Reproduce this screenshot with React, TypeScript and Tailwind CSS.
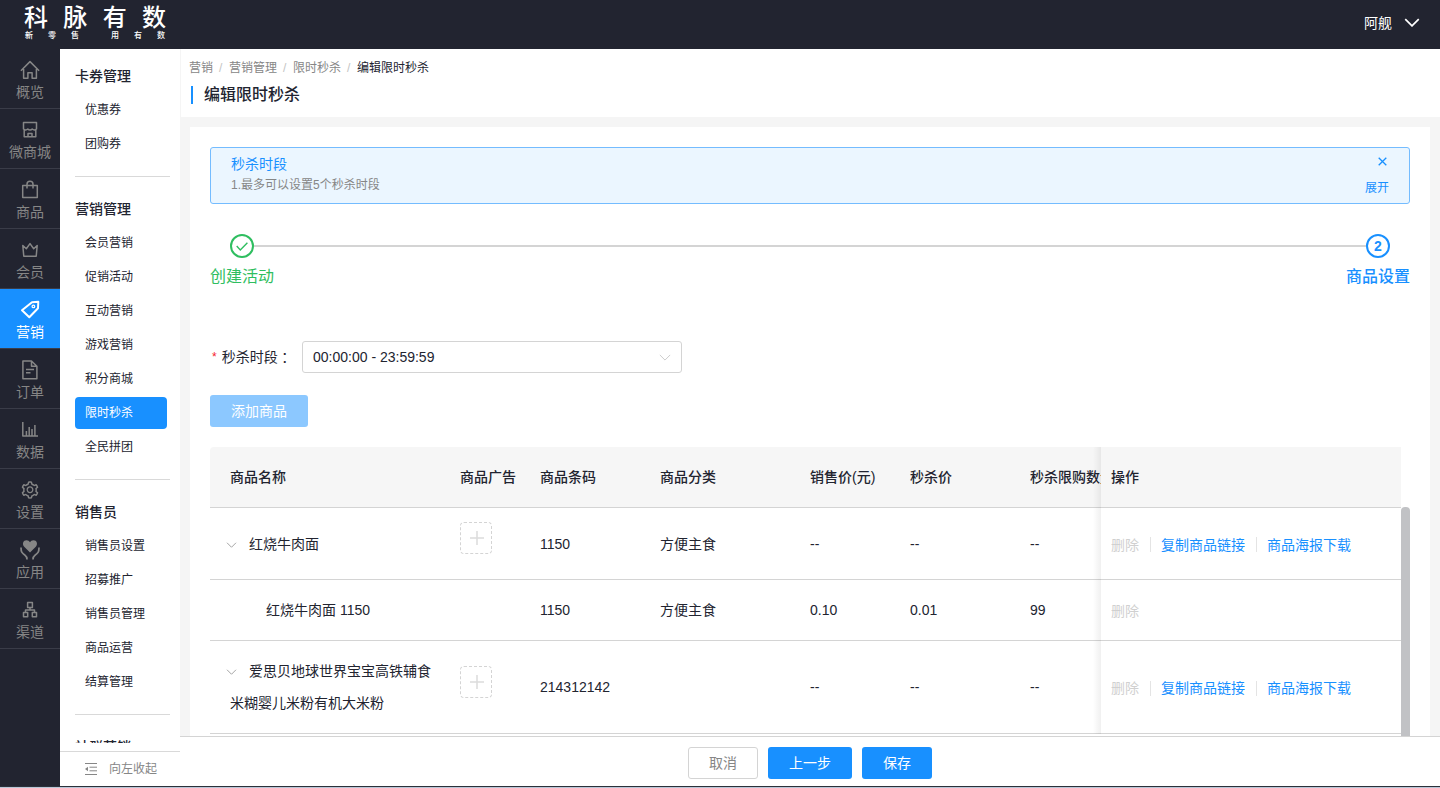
import React from "react";
import { AiOutlineSetting } from "react-icons/ai";

type IconProps = { children: React.ReactNode; strong?: boolean };

function Glyph({ children, strong }: IconProps) {
  return (
    <svg
      viewBox="0 0 20 20"
      className="size-5"
      fill="none"
      stroke="currentColor"
      strokeWidth={strong ? 2 : 1.5}
      strokeLinejoin="round"
      aria-hidden="true"
    >
      {children}
    </svg>
  );
}

const icons = {
  home: (
    <Glyph>
      <path d="M.9 10.8 10 1.6l9.100 9.200M3.600 9v9.300h4.300v-5.600h4.200v5.600h4.300V9" />
    </Glyph>
  ),
  shop: (
    <Glyph>
      <path d="M3.500 2.500h13v6.500a3 3 0 0 1-4.300 0 3 3 0 0 1-4.400 0 3 3 0 0 1-4.300 0zM4.200 9.500v7.200h11.600V9.500M8 16.700v-3.200h4v3.200" />
    </Glyph>
  ),
  bag: (
    <Glyph>
      <path d="M2.700 5.500h14.600v12H2.700zM7 8.500V4.300a3 3 0 0 1 6 0v4.200" />
    </Glyph>
  ),
  crown: (
    <Glyph>
      <path d="m2.800 5.500 3.500 3.200L10 3.600l3.700 5.100 3.500-3.200-1 10.800H3.800z" />
    </Glyph>
  ),
  tag: (
    <Glyph strong>
      <path d="M12 2.200 18.300 1.800 18 8.300 9.300 17.300 2 10.300z" />
      <circle cx="13.400" cy="6.400" r="1.300" strokeWidth="1.300" />
    </Glyph>
  ),
  file: (
    <Glyph>
      <path d="M2.900 1h8.600l5.400 5.200v12.500h-14zM11.500 1v5.200h5.400M6 9.600h8M6 12.700h4.500" />
    </Glyph>
  ),
  chart: (
    <Glyph>
      <path d="M2.800 2v14h15.200M6.400 15.500v-4.500M9.200 15.500V7M12 15.500V9M14.900 15.500V5" />
    </Glyph>
  ),
  gear: <AiOutlineSetting className="size-5" aria-hidden="true" />,
  care: (
    <Glyph>
      <path
        d="M10 12.500 4.200 6.800C1.800 3.800 3.200.2 6.500.2c1.600 0 2.800.8 3.500 2 .7-1.200 1.900-2 3.500-2 3.300 0 4.700 3.600 2.300 6.600z"
        fill="currentColor"
        stroke="none"
      />
      <path
        d="M1 7.500c0 4.500.8 5.500 4 7.700 1.800 1.200 2 2.200 2 4.300M19 7.500c0 4.500-.8 5.500-4 7.700-1.800 1.200-2 2.200-2 4.300"
        strokeWidth="1.700"
      />
    </Glyph>
  ),
  tree: (
    <Glyph>
      <path d="M7.600 2.600h4.800v4.800H7.600zM3.500 12.500h4.200v4.300H3.500zM12.300 12.500h4.200v4.300h-4.200zM10 7.400V10M5.500 12.500V10h9v2.500" />
    </Glyph>
  ),
};

const modules = [
  { label: "概览", icon: icons.home },
  { label: "微商城", icon: icons.shop },
  { label: "商品", icon: icons.bag },
  { label: "会员", icon: icons.crown },
  { label: "营销", icon: icons.tag, active: true },
  { label: "订单", icon: icons.file },
  { label: "数据", icon: icons.chart },
  { label: "设置", icon: icons.gear },
  { label: "应用", icon: icons.care },
  { label: "渠道", icon: icons.tree },
];

const sections = [
  { title: "卡券管理", items: ["优惠券", "团购券"] },
  {
    title: "营销管理",
    items: ["会员营销", "促销活动", "互动营销", "游戏营销", "积分商城", "限时秒杀", "全民拼团"],
  },
  { title: "销售员", items: ["销售员设置", "招募推广", "销售员管理", "商品运营", "结算管理"] },
  { title: "社群营销", items: [] },
];

const rows = [
  { name: "红烧牛肉面", parent: true, code: "1150", category: "方便主食", price: "--", sale: "--", limit: "--" },
  { name: "红烧牛肉面 1150", parent: false, code: "1150", category: "方便主食", price: "0.10", sale: "0.01", limit: "99" },
  {
    name: "爱思贝地球世界宝宝高铁辅食米糊婴儿米粉有机大米粉",
    parent: true,
    code: "214312142",
    category: "",
    price: "--",
    sale: "--",
    limit: "--",
  },
];

function Chevron({ className }: { className: string }) {
  return (
    <svg viewBox="0 0 14 8" className={className} fill="none" stroke="currentColor" aria-hidden="true">
      <path d="m1 1 6 6 6-6" />
    </svg>
  );
}

function Header() {
  return (
    <header className="flex h-[49px] shrink-0 items-center justify-between bg-[#222430] pr-5 pl-6 text-white">
      <div className="flex w-[142px] flex-col pb-1">
        <div className="flex justify-between text-2xl leading-[26px] font-medium">
          <span>科</span>
          <span>脉</span>
          <span>有</span>
          <span>数</span>
        </div>
        <div className="flex justify-between px-px text-[8px] leading-[10px] font-medium">
          <div className="flex gap-[15px]">
            <span>新</span>
            <span>零</span>
            <span>售</span>
          </div>
          <div className="flex gap-[15px]">
            <span>用</span>
            <span>有</span>
            <span>数</span>
          </div>
        </div>
      </div>
      <button type="button" className="flex items-center gap-3 pb-1 text-sm">
        阿舰
        <Chevron className="h-[9px] w-4 stroke-[1.5]" />
      </button>
    </header>
  );
}

function ModuleNav() {
  return (
    <nav className="w-[60px] shrink-0 bg-[#222430]">
      {modules.map((m) => (
        <a
          key={m.label}
          href="#"
          className={
            m.active
              ? "flex h-[60px] flex-col items-center gap-0.5 border-b border-[#3a3c48] bg-[#1890ff] pt-[11px] text-sm leading-5 text-white"
              : "flex h-[60px] flex-col items-center gap-0.5 border-b border-[#3a3c48] pt-[11px] text-sm leading-5 text-[#868686]"
          }
        >
          {m.icon}
          {m.label}
        </a>
      ))}
    </nav>
  );
}

function SubNav() {
  return (
    <nav className="flex w-[120px] shrink-0 flex-col bg-white">
      <div className="mb-2 min-h-0 flex-1 overflow-hidden pr-2.5 pl-[15px]">
        {sections.map((s, i) => (
          <section
            key={s.title}
            className={
              i === 0 ? "border-b border-[#d9d9d9] pt-[15px] pb-3.5" : "border-b border-[#d9d9d9] pt-5 pb-3.5"
            }
          >
            <h2 className="mb-1.5 text-sm leading-6 font-medium text-[#222430]">{s.title}</h2>
            {s.items.map((item) => (
              <a
                key={item}
                href="#"
                className={
                  item === "限时秒杀"
                    ? "mr-[3px] mb-0.5 block rounded bg-[#1890ff] px-2.5 text-xs leading-8 text-white"
                    : "mr-[3px] mb-0.5 block px-2.5 text-xs leading-8 text-[#222430]"
                }
              >
                {item}
              </a>
            ))}
          </section>
        ))}
      </div>
      <button
        type="button"
        className="flex h-[35px] shrink-0 items-center gap-3 border-t border-[#d9d9d9] pl-[25px] text-xs text-[#868686]"
      >
        <svg viewBox="0 0 12 12" className="size-3" fill="none" stroke="currentColor" aria-hidden="true">
          <path d="M0 .5h12M4.500 4.200H12M4.500 7.800H12M0 11.500h12" />
          <path d="M3 3.700v4.600L0 6z" fill="currentColor" stroke="none" />
        </svg>
        向左收起
      </button>
    </nav>
  );
}

function PageHead() {
  const crumbs = ["营销", "营销管理", "限时秒杀"];
  return (
    <div className="h-[68px] shrink-0 border-l border-[#f5f5f5] bg-white pt-[9px] pl-2">
      <nav aria-label="面包屑" className="flex gap-1.5 text-xs leading-5 text-[#868686]">
        {crumbs.map((c) => (
          <React.Fragment key={c}>
            <a href="#">{c}</a>
            <span className="w-1 text-[#c4c4c4]">/</span>
          </React.Fragment>
        ))}
        <span className="text-[#222430]">编辑限时秒杀</span>
      </nav>
      <div className="mt-[5px] flex items-center gap-[11px] pl-0.5">
        <span className="h-[18px] w-0.5 bg-[#1890ff]" />
        <h1 className="text-base leading-6 font-medium text-[#222430]">编辑限时秒杀</h1>
      </div>
    </div>
  );
}

function Notice() {
  return (
    <div className="flex justify-between rounded-[3px] border border-[#74bcff] bg-[#ebf6ff] px-5 py-1.5">
      <div>
        <p className="text-sm leading-5 text-[#1890ff]">秒杀时段</p>
        <p className="text-xs leading-[23px] text-[#868686]">1.最多可以设置5个秒杀时段</p>
      </div>
      <div className="flex flex-col items-end text-xs text-[#1890ff]">
        <button type="button" aria-label="关闭" className="flex h-3.5 items-center pr-0.5">
          <svg viewBox="0 0 9 9" className="size-[9px]" fill="none" stroke="currentColor" strokeWidth="1.300">
            <path d="m.7.700 7.600 7.600M8.300.7.700 8.300" />
          </svg>
        </button>
        <button type="button" className="mt-[11px] leading-[18px]">
          展开
        </button>
      </div>
    </div>
  );
}

function Steps() {
  return (
    <ol className="mt-[30px] flex items-start">
      <li className="flex w-16 flex-col items-center gap-[7px] text-[#2fbe60]">
        <span className="flex size-6 items-center justify-center rounded-full border-2 border-current">
          <svg viewBox="0 0 12 9" className="h-[9px] w-3" fill="none" stroke="currentColor" strokeWidth="1.400">
            <path d="m.7 4 3.600 3.900L11.400.8" />
          </svg>
        </span>
        <span className="text-base leading-6">创建活动</span>
      </li>
      <li aria-hidden="true" className="-mx-5 mt-[11px] h-0.5 flex-1 bg-[#d4d4d4]" />
      <li className="flex w-16 flex-col items-center gap-[7px] font-medium text-[#1890ff]">
        <span className="flex size-6 items-center justify-center rounded-full border-2 border-current text-sm font-bold">
          2
        </span>
        <span className="text-base leading-6">商品设置</span>
      </li>
    </ol>
  );
}

function GoodsTable() {
  const th = "bg-[#f6f6f6] border-b border-[#d4d4d4] px-2.5 py-3.5 text-left leading-8 font-medium whitespace-nowrap";
  const td = "border-b border-[#d4d4d4] px-2.5 py-3.5 leading-8";
  const edge =
    "relative border-b border-[#d4d4d4] py-3.5 px-2.5 text-left leading-8 before:absolute before:-bottom-px before:top-0 before:-left-2 before:w-2 before:bg-linear-to-l before:from-black/6 before:to-transparent";
  return (
    <div className="mt-5 flex flex-1">
      <div className="min-w-0 flex-1">
        <table className="w-full table-fixed border-separate border-spacing-0 text-sm text-[#222430]">
          <colgroup>
            <col className="w-60" />
            <col className="w-20" />
            <col className="w-[120px]" />
            <col className="w-[150px]" />
            <col className="w-[100px]" />
            <col className="w-[120px]" />
            <col />
            <col className="w-[300px]" />
          </colgroup>
          <thead>
            <tr>
              <th className="rounded-tl border-b border-[#d4d4d4] bg-[#f6f6f6] py-3.5 pr-2.5 pl-5 text-left leading-8 font-medium">
                商品名称
              </th>
              <th className={th}>商品广告</th>
              <th className={th}>商品条码</th>
              <th className={th}>商品分类</th>
              <th className={th}>销售价(元)</th>
              <th className={th}>秒杀价</th>
              <th className="overflow-hidden border-b border-[#d4d4d4] bg-[#f6f6f6] py-3.5 pl-2.5 text-left leading-8 font-medium whitespace-nowrap">
                秒杀限购数量
              </th>
              <th className={edge + " bg-[#f6f6f6] font-medium"}>操作</th>
            </tr>
          </thead>
          <tbody>
            {rows.map((r) => (
              <tr key={r.name}>
                <td
                  className={
                    r.parent
                      ? "border-b border-[#d4d4d4] py-3.5 pr-2.5 pl-5 leading-8"
                      : "border-b border-[#d4d4d4] py-3.5 pr-2.5 pl-14 leading-8"
                  }
                >
                  {r.parent && (
                    <button type="button" aria-label="收起" className="mr-3 -ml-1 text-[#868686]">
                      <Chevron className="inline-block h-1.5 w-[11px]" />
                    </button>
                  )}
                  {r.name}
                </td>
                <td className={td}>
                  {r.parent && (
                    <button
                      type="button"
                      aria-label="添加广告图"
                      className="mb-[11px] flex size-8 items-center justify-center rounded border border-dashed border-[#d4d4d4] text-[#dcdcdc]"
                    >
                      <svg viewBox="0 0 14 14" className="ml-0.5 size-3.5" stroke="currentColor" strokeWidth="1.500">
                        <path d="M7 0v14M0 7h14" />
                      </svg>
                    </button>
                  )}
                </td>
                <td className={td}>{r.code}</td>
                <td className={td}>{r.category}</td>
                <td className={td}>{r.price}</td>
                <td className={td}>{r.sale}</td>
                <td className={td}>{r.limit}</td>
                <td className={edge}>
                  <div className="flex items-center pt-0.5 leading-7">
                    <button type="button" disabled className="text-[#d0d0d0]">
                      删除
                    </button>
                    {r.parent && (
                      <>
                        <span className="mr-2.5 ml-[11px] h-[15px] w-px bg-[#e4e4e4]" />
                        <a href="#" className="text-[#1890ff]">
                          复制商品链接
                        </a>
                        <span className="mr-2.5 ml-[11px] h-[15px] w-px bg-[#e4e4e4]" />
                        <a href="#" className="text-[#1890ff]">
                          商品海报下载
                        </a>
                      </>
                    )}
                  </div>
                </td>
              </tr>
            ))}
          </tbody>
        </table>
      </div>
      <div className="mt-[60px] w-[9px] rounded-t bg-[#c1c2c5]" />
    </div>
  );
}

export default function App() {
  return (
    <div className="flex h-screen flex-col overflow-hidden bg-white font-['Liberation_Sans','Noto_Sans_CJK_SC',sans-serif]">
      <Header />
      <div className="flex min-h-0 flex-1">
        <ModuleNav />
        <SubNav />
        <main className="flex min-w-0 flex-1 flex-col bg-[#f5f5f5]">
          <PageHead />
          <div className="flex min-h-0 flex-1 flex-col overflow-hidden px-2.5 pt-2.5">
            <div className="flex min-h-0 flex-1 flex-col bg-white px-5 pt-5">
              <Notice />
              <Steps />
              <div className="mt-[52px] flex items-center text-sm text-[#222430]">
                <label htmlFor="slot" className="flex w-[92px] items-center pl-0.5">
                  <span className="mr-[5px] text-xs text-[#f5222d]">*</span>
                  秒杀时段
                  <span className="font-['Noto_Sans_CJK_TC',sans-serif]" lang="zh-TW">
                    ：
                  </span>
                </label>
                <div className="relative w-[380px]">
                  <select
                    id="slot"
                    className="h-8 w-full appearance-none rounded-[3px] border border-[#d4d4d4] bg-white px-2.5"
                  >
                    <option>00:00:00 - 23:59:59</option>
                  </select>
                  <Chevron className="pointer-events-none absolute top-[13px] right-[11px] h-[7px] w-3 text-[#c4c4c4]" />
                </div>
              </div>
              <button
                type="button"
                disabled
                className="mt-[22px] h-8 self-start rounded-[3px] bg-[#8cc8ff] px-[21px] text-sm text-white"
              >
                添加商品
              </button>
              <GoodsTable />
            </div>
          </div>
          <footer className="flex h-[50px] shrink-0 items-start justify-center gap-2.5 border-t border-[#d4d4d4] bg-white pt-2.5 text-sm">
            <button type="button" className="h-8 rounded-[3px] border border-[#d4d4d4] bg-white px-5 text-[#868686]">
              取消
            </button>
            <button type="button" className="h-8 rounded-[3px] bg-[#1890ff] px-[21px] text-white">
              上一步
            </button>
            <button type="button" className="h-8 rounded-[3px] bg-[#1890ff] px-[21px] text-white">
              保存
            </button>
          </footer>
        </main>
      </div>
      <div className="h-0.5 shrink-0 border-t border-[#2b303a] bg-[#b9c6d6]" />
    </div>
  );
}
